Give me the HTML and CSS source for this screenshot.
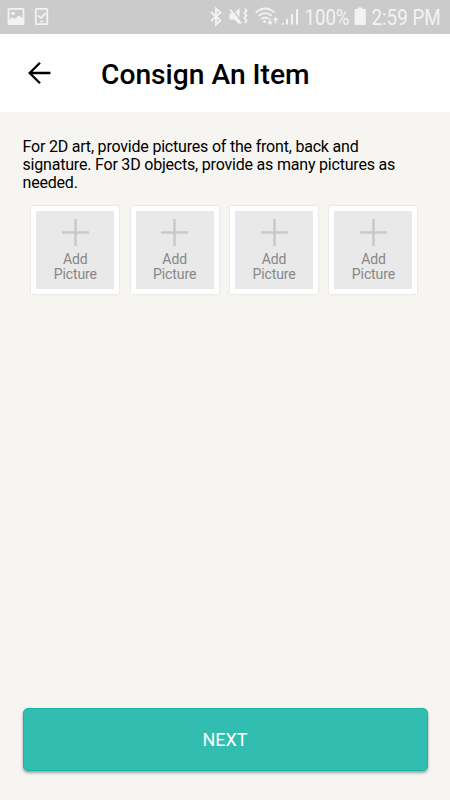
FILE: index.html
```html
<!DOCTYPE html>
<html lang="en">
<head>
    <meta charset="UTF-8">
    <meta name="viewport" content="width=device-width, initial-scale=1.0">
    <title>Consign An Item</title>
    <link rel="stylesheet" href="styles.css">
</head>
<body>

    <div class="screen">

        <!-- Status Bar -->
        <div class="status-bar">
            <svg class="status-icons" width="450" height="34" viewBox="0 0 450 34">
                <!-- Picture -->
                <rect class="line" x="8.500" y="8.800" width="15" height="15.400" rx="1"/>
                <circle cx="13" cy="13.500" r="1.700"/>
                <path d="M8.500 20.500l3.500-3.500 2.500 2 4.500-3.500 4.500 3.500v5h-15z"/>
                <!-- Task check -->
                <rect class="line" x="35.800" y="8.800" width="11.500" height="15.400" rx="1"/>
                <path class="line" d="M38 15.300l2.800 2.800 5-5"/>
                <path class="line thin" d="M40 21.500h3.500"/>
                <!-- Bluetooth -->
                <path class="line" d="M211 12l9.500 8.500-4.500 4V8.500l4.500 4-9.500 8.500"/>
                <!-- Muted -->
                <path d="M229.500 13.200h4.500l5.500-5v16.300l-5.500-5h-4.500z"/>
                <path class="cut" d="M231.500 8l10 13.500"/>
                <path class="line" d="M230 9.500l11 14M245 8.500l1.500 2.200-2 2.500 2 2.400-2 2.400 2 2.400-1.500 2.700"/>
                <!-- Wifi -->
                <path class="line" d="M255.800 12.500q9.500-8 18.800 0M258.800 15.800q6.500-5.300 12.800 0M261.500 19q3.700-3 7 0"/>
                <circle cx="264.700" cy="21.500" r="1.500"/>
                <path class="line thin" d="M270 18.500v5.500m-2-2l2 2 2-2M275.500 23.500V18m-2 2l2-2 2 2"/>
                <!-- Signal -->
                <path d="M281 24.500l3-2v2zM286 19.500l2-1.200v6.200h-2zM291 14.800l2-1.200v10.900h-2zM296 9.700l2-1.200v16h-2z"/>
                <text transform="translate(304.500 24.500) scale(0.845 1)">100%</text>
                <!-- Battery -->
                <path d="M358 7.500h4.500V9h2.200q1.100 0 1.100 1.200v13.600q0 1.200-1.100 1.200h-9q-1.100 0-1.100-1.200V10.200q0-1.200 1.100-1.200h2.300z"/>
                <text transform="translate(371.500 24.500) scale(0.855 1)">2:59 PM</text>
            </svg>
        </div>

        <!-- Header -->
        <header class="header">
            <svg class="back" width="24" height="24" viewBox="0 0 24 24">
                <path d="M13 1.700L2.700 12 13 22.300M3 12h20.400"/>
            </svg>
            <h1 class="title">Consign An Item</h1>
        </header>

        <main class="content">
            <p class="hint">For 2D art, provide pictures of the front, back and<br>signature. For 3D objects, provide as many pictures as<br>needed.</p>

            <div class="pictures">
                <button class="picture">
                    <svg class="plus" width="27" height="27" viewBox="0 0 27 27"><path d="M13.500 0v27M0 13.500h27"/></svg>
                    <span>Add<br>Picture</span>
                </button>
                <button class="picture">
                    <svg class="plus" width="27" height="27" viewBox="0 0 27 27"><path d="M13.500 0v27M0 13.500h27"/></svg>
                    <span>Add<br>Picture</span>
                </button>
                <button class="picture">
                    <svg class="plus" width="27" height="27" viewBox="0 0 27 27"><path d="M13.500 0v27M0 13.500h27"/></svg>
                    <span>Add<br>Picture</span>
                </button>
                <button class="picture">
                    <svg class="plus" width="27" height="27" viewBox="0 0 27 27"><path d="M13.500 0v27M0 13.500h27"/></svg>
                    <span>Add<br>Picture</span>
                </button>
            </div>

            <button class="next">NEXT</button>
        </main>

    </div>

</body>
</html>
```
FILE: styles.css
```css
* { box-sizing: border-box; }

body {
    margin: 0;
    font-family: Roboto, "Liberation Sans", sans-serif;
    background: #f6f5f1;
    color: #000;
}
button {
    font-family: inherit;
    border: none;
}
.screen {
    display: flex;
    flex-direction: column;
    height: 800px;
}

/* Status Bar */
.status-bar {
    height: 33.5px;
    background: #cbcbcb;
}
.status-icons {
    display: block;
    fill: #f3f3f3;
    font-size: 22px;
}
.status-icons .line {
    fill: none;
    stroke: #f3f3f3;
    stroke-width: 1.8;
}
.status-icons .thin { stroke-width: 1.4; }
.status-icons .cut {
    stroke: #cbcbcb;
    stroke-width: 1.6;
}

/* Header */
.header {
    display: flex;
    align-items: center;
    height: 78.5px;
    padding-left: 27px;
    background: #fff;
}
.back {
    fill: none;
    stroke: #000;
    stroke-width: 2.3;
}
.title {
    margin: 3px 0 0 50px;
    font-size: 28.2px;
    font-weight: 500;
}

.content {
    flex: 1;
    display: flex;
    flex-direction: column;
    padding: 25.5px 22.5px 29px;
}
.hint {
    margin: 0;
    font-size: 16px;
    letter-spacing: -0.2px;
    line-height: 18.2px;
    white-space: nowrap;
}

/* Picture slots */
.pictures {
    display: flex;
    gap: 11.4px;
    margin: 14px 0 0 8.8px;
}
.picture {
    display: flex;
    flex-direction: column;
    align-items: center;
    width: 88px;
    height: 87.5px;
    padding: 8px 0 0;
    border: 5px solid #fff;
    background: #e9e9e9;
    box-shadow: 0 0 2px rgba(0, 0, 0, 0.14);
    color: #878787;
    font-size: 14px;
    letter-spacing: -0.1px;
    line-height: 15.5px;
}
.plus {
    margin-bottom: 5.5px;
    stroke: #c9c9c9;
    stroke-width: 2.5;
}

.next {
    height: 63px;
    margin-top: auto;
    border: 1px solid #18b5a5;
    border-radius: 5px;
    background: #31beb1;
    box-shadow: 0 2px 3px rgba(0, 0, 0, 0.35);
    color: #fff;
    font-size: 18px;
}
```
